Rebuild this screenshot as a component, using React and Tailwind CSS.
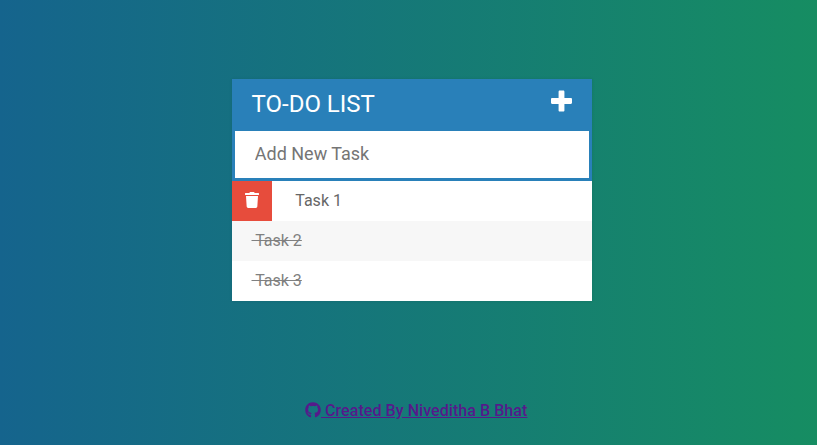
import { FaTrash, FaGithub } from "react-icons/fa";

const tasks = ["Task 2", "Task 3"];

function PlusIcon({ className }) {
  return (
    <svg viewBox="0 0 448 512" fill="currentColor" className={className}>
      <path d="M448 294.2v-76.4c0-13.3-10.7-24-24-24H286.2V56c0-13.3-10.7-24-24-24h-76.4c-13.3 0-24 10.7-24 24v137.8H24c-13.3 0-24 10.7-24 24v76.4c0 13.3 10.7 24 24 24h137.8V456c0 13.3 10.7 24 24 24h76.4c13.3 0 24-10.7 24-24V318.2H424c13.3 0 24-10.7 24-24z" />
    </svg>
  );
}

export default function App() {
  return (
    <div className="h-[445px] w-full overflow-hidden bg-[linear-gradient(to_right,#15648d,#168d62)] pt-[79px] font-['Roboto',sans-serif]">
      <main className="ml-[232px] w-[360px] bg-[#f7f7f7] shadow-[0_0_3px_rgba(0,0,0,0.1)]">
        <header className="flex h-[49px] items-start justify-between bg-[#2980b9] pr-5 pl-[19.5px] text-white">
          <h1 className="pt-[7px] text-2xl leading-9 font-normal">TO-DO LIST</h1>
          <PlusIcon className="mt-[10px] h-6 w-[21px]" />
        </header>
        <input
          type="text"
          placeholder="Add New Task"
          className="block h-[53px] w-full border-3 border-[#2980b9] bg-white pr-5 pb-[3px] pl-[19.75px] text-[18px] text-[#2980b9] outline-none placeholder:text-[#757575]"
        />
        <ul className="text-base leading-10 text-[#666]">
          <li className="flex h-10 bg-white">
            <span className="flex w-10 items-center justify-center bg-[#e74c3c] pb-[2px] text-white">
              <FaTrash className="h-4 w-[14px]" />
            </span>
            <span className="ml-[23.25px]">Task 1</span>
          </li>
          {tasks.map((task) => (
            <li key={task} className="h-10 pl-[19.5px] whitespace-pre text-[#808080] line-through odd:bg-white even:bg-[#f7f7f7]">
              {" " + task}
            </li>
          ))}
        </ul>
      </main>
      <footer className="mt-[100px] ml-[305px] text-base leading-5 font-medium text-[#551a8b]">
        <a href="#github" className="flex items-center">
          <FaGithub className="mb-[2px] h-4 w-4" />
          <span className="tracking-[0.06px] whitespace-pre underline">{" Created By Niveditha B Bhat"}</span>
        </a>
      </footer>
    </div>
  );
}
